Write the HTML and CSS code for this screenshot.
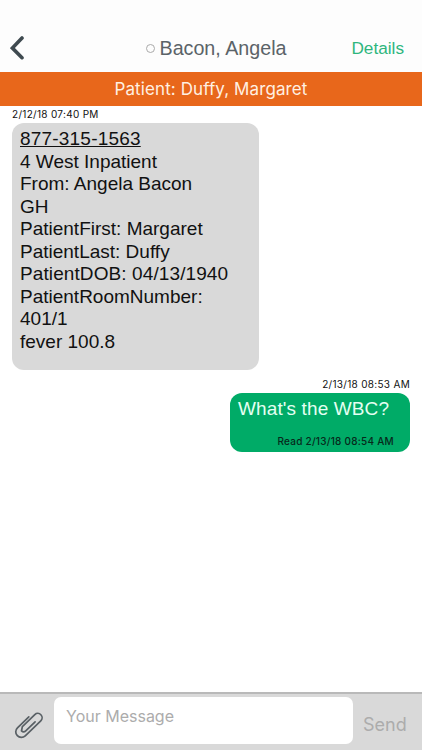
FILE: index.html
```
<!DOCTYPE html>
<html lang="en">
<head>
    <meta charset="UTF-8">
    <meta name="viewport" content="width=device-width, initial-scale=1.0">
    <title>Messages</title>
    <link rel="stylesheet" href="styles.css">
</head>
<body>
    <header class="top-bar">
        <button class="back-button" aria-label="Back">
            <svg width="14" height="24" viewBox="0 0 14 24">
                <path d="M12 2 L2.4 12 L12 21.7" fill="none" stroke="#3f4a50" stroke-width="3.6" stroke-linecap="round"/>
            </svg>
        </button>
        <div class="contact">
            <span class="status"></span>
            <h1 class="contact-name">Bacon, Angela</h1>
        </div>
        <a class="details">Details</a>
    </header>
    <div class="patient-bar"><span>Patient: Duffy, Margaret</span></div>

    <main class="messages">
        <div class="time">2/12/18 07:40 PM</div>
        <div class="bubble received">
            <div><span class="phone">877-315-1563</span></div>
            <div>4 West Inpatient</div>
            <div>From: Angela Bacon</div>
            <div>GH</div>
            <div>PatientFirst: Margaret</div>
            <div>PatientLast: Duffy</div>
            <div class="dob">PatientDOB: 04/13/1940</div>
            <div>PatientRoomNumber:</div>
            <div>401/1</div>
            <div>fever 100.8</div>
        </div>
        <div class="time time-sent">2/13/18 08:53 AM</div>
        <div class="bubble sent">
            <div class="sent-text">What's the WBC?</div>
            <div class="read">Read 2/13/18 08:54 AM</div>
        </div>
    </main>

    <footer class="composer">
        <button class="attach-button" aria-label="Attach">
            <svg width="30" height="28" viewBox="0 0 30 28">
                <!-- Paperclip -->
                <g transform="translate(15.4 14) rotate(46)" fill="none" stroke="#596065" stroke-width="1.7" stroke-linecap="round">
                    <path d="M-5.6 -6 V9.8 A5.6 5.6 0 0 0 5.6 9.8 V-11.8 A4.3 4.3 0 0 0 -3 -11.8 V5.5 L-0.6 9 Q2.4 9 2.4 6 V-7"/>
                </g>
            </svg>
        </button>
        <input class="message-input" type="text" placeholder="Your Message">
        <button class="send-button">Send</button>
    </footer>
</body>
</html>
```
FILE: styles.css
```
* {
    box-sizing: border-box;
}

body {
    display: flex;
    flex-direction: column;
    height: 100vh;
    margin: 0;
    background: #fff;
    color: #111;
    font-family: "Liberation Sans", Arial, sans-serif;
}

button {
    padding: 0;
    border: none;
    background: none;
    font-family: inherit;
}

svg {
    display: block;
}

.top-bar {
    display: grid;
    grid-template-columns: 100px 1fr 82px;
    align-items: center;
    height: 72px;
    padding: 24px 18px 0 10px;
    background: #fdfdfd;
}

.back-button {
    justify-self: start;
}

.contact {
    display: flex;
    align-items: center;
    justify-content: center;
    gap: 5px;
}

.status {
    width: 9px;
    height: 9px;
    border: 1px solid #aaa;
    border-radius: 50%;
}

.contact-name {
    margin: 0;
    color: #5b6368;
    font-size: 19.7px;
    font-weight: 400;
    white-space: nowrap;
}

.details {
    justify-self: end;
    color: #2eb67d;
    font-size: 17.2px;
}

.patient-bar {
    height: 34px;
    background: #e8671b;
    color: #fff0e2;
    font-family: Inter, sans-serif;
    font-size: 17px;
    letter-spacing: 0.1px;
    line-height: 35px;
    text-align: center;
}

.messages {
    display: flex;
    flex: 1;
    flex-direction: column;
    align-items: flex-start;
    padding: 0 12px;
}

.time {
    height: 17px;
    font-family: Inter, sans-serif;
    font-size: 10px;
    letter-spacing: 0.3px;
    line-height: 17px;
}

.time-sent {
    align-self: flex-end;
    height: 23px;
    line-height: 29px;
}

.bubble {
    border-radius: 12px;
    font-size: 19px;
    line-height: 22.5px;
}

.received {
    width: 247px;
    height: 247px;
    padding: 5px 8px;
    background: #d9d9d9;
}

.phone {
    letter-spacing: 0.2px;
    text-decoration: underline;
    text-decoration-thickness: 1px;
}

.dob {
    letter-spacing: 0.1px;
}

.sent {
    align-self: flex-end;
    width: 180px;
    height: 59px;
    padding: 5px 8px;
    background: #00ab67;
}

.sent-text {
    color: #e4fff2;
    letter-spacing: 0.12px;
}

.read {
    margin-top: 9px;
    padding-right: 8px;
    color: #07291b;
    font-family: Inter, sans-serif;
    font-size: 10px;
    font-weight: 500;
    letter-spacing: 0.25px;
    line-height: 22px;
    text-align: right;
}

.composer {
    display: flex;
    align-items: flex-start;
    height: 58px;
    border-top: 2px solid #b9b9b9;
    background: #d9d9d9;
}

.attach-button {
    margin: 17px 11px 0 13px;
}

.message-input {
    width: 299px;
    height: 47px;
    margin-top: 3px;
    padding: 0 12px 9px;
    border: none;
    border-radius: 7px;
    background: #fff;
    font-family: Inter, sans-serif;
    font-size: 16px;
}

.message-input::placeholder {
    color: #acacac;
}

.send-button {
    margin: 20px 0 0 10px;
    color: #acacac;
    font-family: Inter, sans-serif;
    font-size: 18px;
}
```
